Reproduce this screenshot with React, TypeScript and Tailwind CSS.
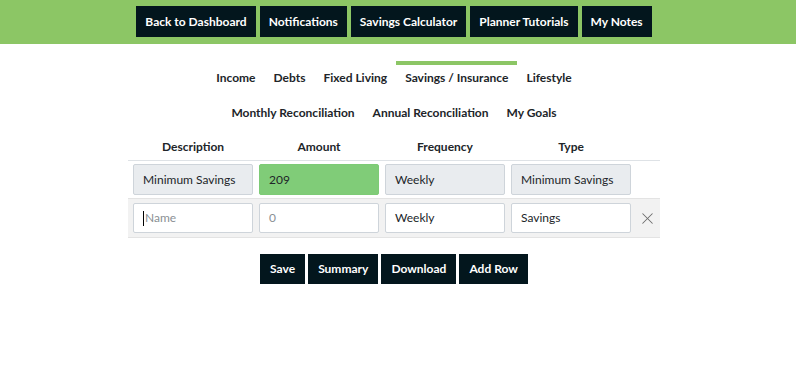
import { X } from 'lucide-react';

const topLinks = ['Back to Dashboard', 'Notifications', 'Savings Calculator', 'Planner Tutorials', 'My Notes'];
const tabsTop = ['Income', 'Debts', 'Fixed Living', 'Savings / Insurance', 'Lifestyle'];
const tabsBottom = ['Monthly Reconciliation', 'Annual Reconciliation', 'My Goals'];
const headers = ['Description', 'Amount', 'Frequency', 'Type'];

const cellBase =
  'w-[120px] shrink-0 whitespace-nowrap border px-[9px] text-[12px] flex items-center rounded-[2px]';

const App = () => {
  return (
    <div className="min-h-[365px] bg-white font-['Lato','Liberation_Sans',sans-serif] text-[#212529]">
      <div className="h-[44px] bg-[#8cc665]">
        <div className="flex w-[788px] justify-center gap-[4px] pt-[6px]">
          {topLinks.map(l => (
            <button key={l} className="h-[31px] bg-[#03161d] px-[9px] text-[12px] font-bold text-white">
              {l}
            </button>
          ))}
        </div>
      </div>

      <div className="w-[788px]">
        <div className="mt-[17px] flex justify-center">
          {tabsTop.map(t => (
            <div
              key={t}
              className={`border-t-[4px] px-[9px] pb-[11px] pt-[5px] text-[12px] font-bold leading-[15px] ${
                t === 'Savings / Insurance' ? 'border-[#8cc665]' : 'border-transparent'
              }`}
            >
              {t}
            </div>
          ))}
        </div>
        <div className="flex justify-center">
          {tabsBottom.map(t => (
            <div
              key={t}
              className="border-t-[4px] border-transparent px-[9px] pb-[12px] pt-[5px] text-[12px] font-bold leading-[15px]"
            >
              {t}
            </div>
          ))}
        </div>

        <div className="mx-auto mt-[7px] w-[532px] text-[12px]">
          <div className="flex gap-[6px] px-[5px] pb-[6px]">
            {headers.map(h => (
              <div key={h} className="w-[120px] shrink-0 text-center font-bold leading-[15px]">
                {h}
              </div>
            ))}
          </div>
          <div className="flex gap-[6px] border-t border-[#dee2e6] px-[5px] py-[3px]">
            <div className={`${cellBase} h-[31px] border-[#ced4da] bg-[#e9ecef]`}>Minimum Savings</div>
            <div className={`${cellBase} h-[31px] border-[#7dcb76] bg-[#80cc78]`}>209</div>
            <div className={`${cellBase} h-[31px] border-[#ced4da] bg-[#e9ecef]`}>Weekly</div>
            <div className={`${cellBase} h-[31px] border-[#ced4da] bg-[#e9ecef]`}>Minimum Savings</div>
          </div>
          <div className="flex items-center gap-[6px] border-y border-[#e3e3e3] bg-[#f2f2f2] px-[5px] py-[4px]">
            <div className={`${cellBase} h-[30px] border-[#ced4da] bg-white text-[#8a8f94]`}>
              <span className="mr-[1px] inline-block h-[15px] w-[1px] bg-black" />
              Name
            </div>
            <div className={`${cellBase} h-[30px] border-[#ced4da] bg-white text-[#8a8f94]`}>0</div>
            <div className={`${cellBase} h-[30px] border-[#ced4da] bg-white`}>Weekly</div>
            <div className={`${cellBase} h-[30px] border-[#ced4da] bg-white`}>Savings</div>
            <X className="ml-[1px] h-[19px] w-[19px] shrink-0 text-[#6c6c6c]" strokeWidth={1.3} />
          </div>
        </div>

        <div className="mt-[16px] flex justify-center gap-[3px]">
          {['Save', 'Summary', 'Download', 'Add Row'].map(b => (
            <button key={b} className="h-[30px] bg-[#03161d] px-[10px] text-[12px] font-bold text-white">
              {b}
            </button>
          ))}
        </div>
      </div>
    </div>
  );
};

export default App;
